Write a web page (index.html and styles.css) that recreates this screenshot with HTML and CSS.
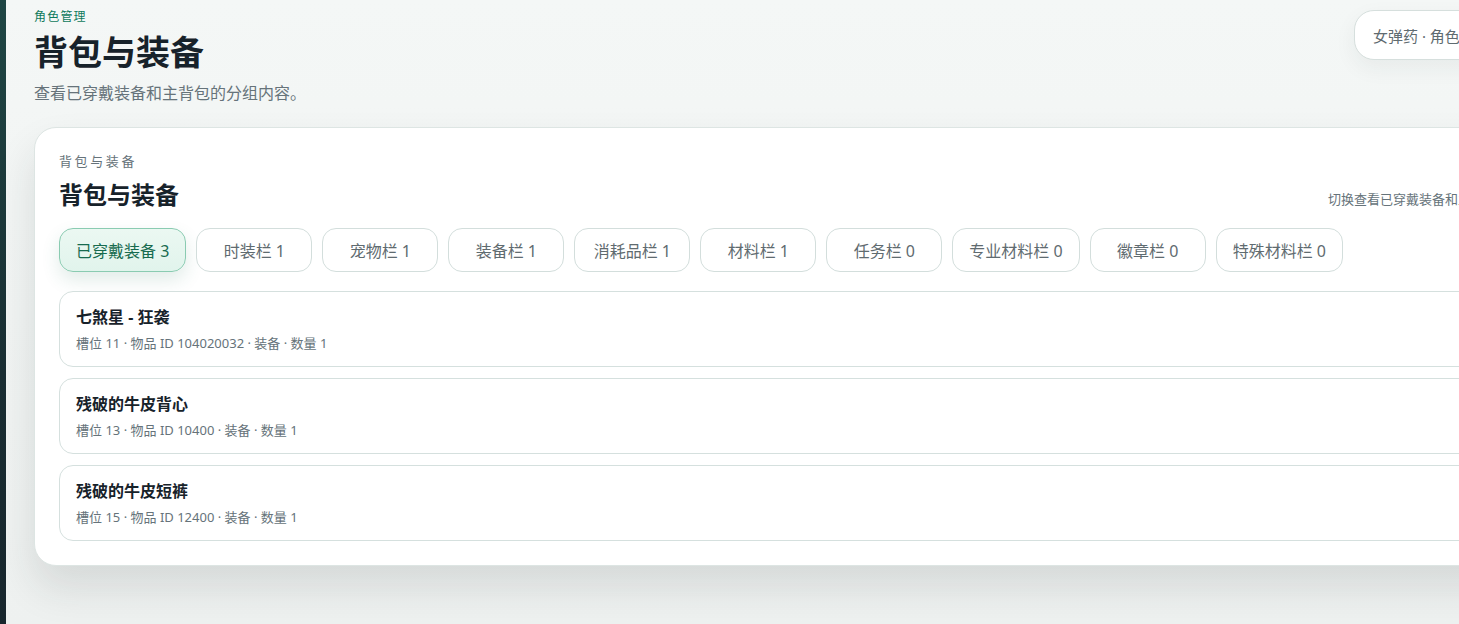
FILE: index.html
```html
<!DOCTYPE html>
<html>
<head>
  <meta charset="utf-8">
  <title>背包与装备</title>
  <link rel="stylesheet" href="styles.css">
</head>
<body>
  <div class="app">
    <aside class="sidebar"></aside>

    <main class="main">
      <header class="page-head">
        <div class="page-title">
          <div class="eyebrow">角色管理</div>
          <h1>背包与装备</h1>
          <p class="lead">查看已穿戴装备和主背包的分组内容。</p>
        </div>
        <div class="role-pill">女弹药 · 角色 10086</div>
      </header>

      <section class="card">
        <div class="card-head">
          <div>
            <div class="card-eyebrow">背包与装备</div>
            <h2>背包与装备</h2>
          </div>
          <div class="card-note">切换查看已穿戴装备和主背包的分组内容。</div>
        </div>

        <div class="tabs">
          <button class="tab active">已穿戴装备 3</button>
          <button class="tab">时装栏 1</button>
          <button class="tab">宠物栏 1</button>
          <button class="tab">装备栏 1</button>
          <button class="tab">消耗品栏 1</button>
          <button class="tab">材料栏 1</button>
          <button class="tab">任务栏 0</button>
          <button class="tab">专业材料栏 0</button>
          <button class="tab">徽章栏 0</button>
          <button class="tab">特殊材料栏 0</button>
        </div>

        <div class="items">
          <div class="item">
            <div class="item-name">七煞星 - 狂袭</div>
            <div class="item-meta">槽位 11 · 物品 ID 104020032 · 装备 · 数量 1</div>
          </div>
          <div class="item">
            <div class="item-name">残破的牛皮背心</div>
            <div class="item-meta">槽位 13 · 物品 ID 10400 · 装备 · 数量 1</div>
          </div>
          <div class="item">
            <div class="item-name">残破的牛皮短裤</div>
            <div class="item-meta">槽位 15 · 物品 ID 12400 · 装备 · 数量 1</div>
          </div>
        </div>
      </section>
    </main>
  </div>
</body>
</html>
```

FILE: styles.css
```css
html, body {
  margin: 0;
  height: 100%;
  overflow: hidden;
}
body {
  font-family: "Noto Sans", "Noto Sans CJK SC", sans-serif;
  color: #1a2328;
  background: linear-gradient(180deg, #f4f7f6 0%, #eef1f0 100%);
}
.app {
  display: flex;
  min-height: 100vh;
}
.sidebar {
  flex: 0 0 6px;
  background: linear-gradient(180deg, #1f4644 0%, #1a2e33 60%, #18262d 100%);
}
.main {
  flex: 0 0 1566px;
  padding: 8px 28px 40px;
}

.page-head {
  display: flex;
  justify-content: space-between;
  align-items: flex-start;
}
.eyebrow {
  font-size: 12px;
  line-height: 18px;
  letter-spacing: 0.1em;
  color: #0e7a5c;
}
h1 {
  margin: 6px 0 0;
  font-size: 34px;
  line-height: 40px;
  font-weight: 700;
  color: #17222a;
}
.lead {
  margin: 11px 0 0;
  font-size: 16px;
  line-height: 20px;
  color: #66737a;
}
.role-pill {
  margin-top: 2px;
  height: 48px;
  width: 208px;
  padding: 0 18px;
  display: flex;
  align-items: center;
  border: 1px solid #d6dfdd;
  border-radius: 20px;
  background: #fff;
  font-size: 15px;
  color: #5f6b70;
  box-shadow: 0 8px 22px rgba(30, 50, 50, 0.06);
  white-space: nowrap;
}

.card {
  margin-top: 24px;
  padding: 24px 24px 24px;
  background: #fff;
  border: 1px solid #dde5e3;
  border-radius: 22px;
  box-shadow: 0 22px 40px rgba(30, 45, 45, 0.12);
}
.card-head {
  display: flex;
  justify-content: space-between;
  align-items: flex-end;
}
.card-eyebrow {
  font-size: 13px;
  line-height: 18px;
  letter-spacing: 0.2em;
  color: #66737a;
}
h2 {
  margin: 9px 0 0;
  font-size: 24px;
  line-height: 32px;
  font-weight: 700;
  color: #17222a;
}
.card-note {
  font-size: 13px;
  line-height: 18px;
  color: #66737a;
  padding-bottom: 3px;
  white-space: nowrap;
}

.tabs {
  display: flex;
  gap: 10px;
  margin-top: 17px;
}
.tab {
  min-width: 116px;
  height: 44px;
  padding: 0 16px;
  border: 1px solid #d3dedc;
  border-radius: 14px;
  background: #fff;
  font-family: inherit;
  font-size: 16px;
  color: #5f6b70;
  cursor: pointer;
}
.tab.active {
  background: linear-gradient(180deg, #ebf8f2 0%, #e1f4ec 100%);
  border-color: #8acbb1;
  color: #176b4f;
  box-shadow: 0 8px 18px rgba(40, 120, 90, 0.14);
}

.items {
  display: flex;
  flex-direction: column;
  gap: 11px;
  margin-top: 19px;
}
.item {
  padding: 14px 16px 14px;
  border: 1px solid #d5e0de;
  border-radius: 14px;
  background: #fff;
}
.item-name {
  font-size: 16px;
  line-height: 22px;
  font-weight: 700;
  color: #17222a;
}
.item-meta {
  margin-top: 6px;
  font-size: 13px;
  line-height: 18px;
  color: #66737a;
}
```
